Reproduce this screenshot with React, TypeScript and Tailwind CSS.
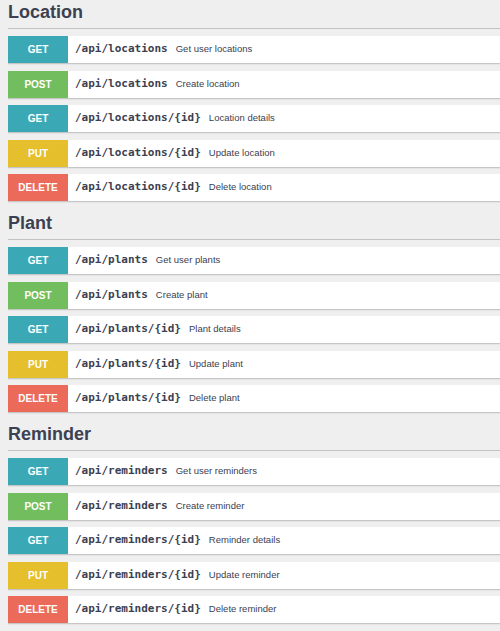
import React from "react";

type Method = "GET" | "POST" | "PUT" | "DELETE";

const badge: Record<Method, string> = {
  GET: "bg-[#3ba9b5]",
  POST: "bg-[#72bd5e]",
  PUT: "bg-[#e5c02c]",
  DELETE: "bg-[#eb6a5a]",
};

type Op = { m: Method; path: string; desc: string };

const sections: { title: string; ops: Op[] }[] = [
  {
    title: "Location",
    ops: [
      { m: "GET", path: "/api/locations", desc: "Get user locations" },
      { m: "POST", path: "/api/locations", desc: "Create location" },
      { m: "GET", path: "/api/locations/{id}", desc: "Location details" },
      { m: "PUT", path: "/api/locations/{id}", desc: "Update location" },
      { m: "DELETE", path: "/api/locations/{id}", desc: "Delete location" },
    ],
  },
  {
    title: "Plant",
    ops: [
      { m: "GET", path: "/api/plants", desc: "Get user plants" },
      { m: "POST", path: "/api/plants", desc: "Create plant" },
      { m: "GET", path: "/api/plants/{id}", desc: "Plant details" },
      { m: "PUT", path: "/api/plants/{id}", desc: "Update plant" },
      { m: "DELETE", path: "/api/plants/{id}", desc: "Delete plant" },
    ],
  },
  {
    title: "Reminder",
    ops: [
      { m: "GET", path: "/api/reminders", desc: "Get user reminders" },
      { m: "POST", path: "/api/reminders", desc: "Create reminder" },
      { m: "GET", path: "/api/reminders/{id}", desc: "Reminder details" },
      { m: "PUT", path: "/api/reminders/{id}", desc: "Update reminder" },
      { m: "DELETE", path: "/api/reminders/{id}", desc: "Delete reminder" },
    ],
  },
];

export default function App() {
  return (
    <div
      className="min-h-[631px] w-[500px] bg-[#efefef] pl-2 overflow-hidden"
      style={{ fontFamily: '"Liberation Sans", Arial, sans-serif' }}
    >
      {sections.map((s) => (
        <div key={s.title} className="mb-[9px]">
          <div className="h-[29px] border-b border-[#c2c2c2] flex items-start">
            <h2 className="text-[18px] font-bold text-[#3b4151] leading-[24px]">
              {s.title}
            </h2>
          </div>
          <div className="mt-[7px] flex flex-col gap-[6.5px]">
            {s.ops.map((o, i) => (
              <div
                key={i}
                className="flex h-[28px] bg-white border-b border-[#c6c6c6] shadow-[0_1px_1px_rgba(0,0,0,0.04)]"
              >
                <div
                  className={`${badge[o.m]} w-[60px] shrink-0 flex items-center justify-center text-white text-[10px] font-bold`}
                >
                  {o.m}
                </div>
                <div className="flex items-center pl-[7px]">
                  <span
                    className="text-[11px] font-bold text-[#3b4151]"
                    style={{ fontFamily: '"DejaVu Sans Mono", monospace' }}
                  >
                    {o.path}
                  </span>
                  <span className="ml-[8px] text-[9.5px] text-[#3b4151]">
                    {o.desc}
                  </span>
                </div>
              </div>
            ))}
          </div>
        </div>
      ))}
    </div>
  );
}
